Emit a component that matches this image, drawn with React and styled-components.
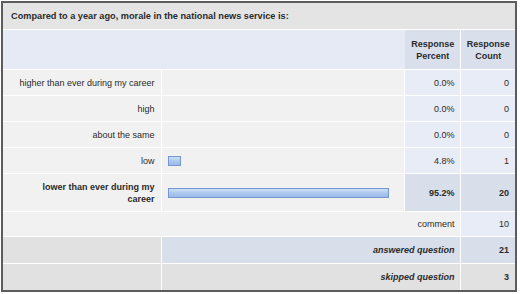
import React from 'react';
import styled, { createGlobalStyle } from 'styled-components';

const GlobalStyle = createGlobalStyle`
  body {
    margin: 0;
    background: #ffffff;
    font-family: "Liberation Sans", Arial, sans-serif;
  }
`;

const Frame = styled.div`
  margin: 1px;
  width: 512px;
  border: 2px solid #5c5c5c;
  background: #ffffff;
`;

const Table = styled.table`
  width: 100%;
  border-collapse: collapse;
  table-layout: fixed;
  font-size: 9px;
  color: #2b2b2b;
`;

const TitleCell = styled.th`
  height: 26px;
  padding: 0 8px;
  background: #e4e4e4;
  border-bottom: 1px solid #ffffff;
  text-align: left;
  font-size: 9.2px;
  font-weight: bold;
`;

const HeadBlank = styled.th`
  height: 37px;
  background: #e5eaf5;
`;

const HeadCell = styled.th`
  padding: 0 5px;
  background: #d9e0eb;
  border-left: ${({ $divided }) => ($divided ? '1px solid #ffffff' : 'none')};
  text-align: center;
  font-weight: bold;
  line-height: 12px;
`;

const Row = styled.tr`
  border-top: 1px solid #ffffff;
`;

const Label = styled.td`
  height: ${({ $tall }) => ($tall ? '37px' : '25px')};
  padding: 0 6px 0 10px;
  background: #f1f1f1;
  border-right: 1px solid #ffffff;
  text-align: right;
  font-weight: ${({ $strong }) => ($strong ? 'bold' : 'normal')};
  line-height: 12px;
`;

const BarCell = styled.td`
  padding: 0 6px;
  background: #f1f1f1;
  border-right: 1px solid #ffffff;
`;

const Bar = styled.div`
  box-sizing: border-box;
  height: 10px;
  border: 1px solid #7596cf;
  background: linear-gradient(to bottom, #cfe0f8 0%, #aac6ef 55%, #9cbbea 100%);
`;

const NumCell = styled.td`
  padding: 0 6px;
  background: ${({ $strong }) => ($strong ? '#d8dfea' : '#e7ecf6')};
  border-right: ${({ $last }) => ($last ? 'none' : '1px solid #ffffff')};
  text-align: right;
  font-weight: ${({ $strong }) => ($strong ? 'bold' : 'normal')};
`;

const SummaryLabel = styled.td`
  height: 24px;
  background: #e1e1e1;
  border-right: 1px solid #ffffff;
`;

const SummaryText = styled.td`
  padding: 0 6px;
  background: ${({ $blue }) => ($blue ? '#d8dfea' : '#e1e1e1')};
  border-right: 1px solid #ffffff;
  text-align: right;
  font-weight: bold;
  font-style: italic;
`;

const SummaryNum = styled.td`
  padding: 0 6px;
  background: ${({ $blue }) => ($blue ? '#d8dfea' : '#e1e1e1')};
  text-align: right;
  font-weight: bold;
`;

const CommentCell = styled.td`
  height: 24px;
  padding: 0 6px;
  background: #f1f1f1;
  border-right: 1px solid #ffffff;
  text-align: right;
`;

const answers = [
  { label: 'higher than ever during my career', percent: 0, count: 0 },
  { label: 'high', percent: 0, count: 0 },
  { label: 'about the same', percent: 0, count: 0 },
  { label: 'low', percent: 4.8, count: 1 },
  { label: 'lower than ever during my career', percent: 95.2, count: 20, top: true },
];

const BAR_TRACK = 230;

const App = () => (
  <>
    <GlobalStyle />
    <Frame>
      <Table>
        <colgroup>
          <col style={{ width: 158 }} />
          <col />
          <col style={{ width: 56 }} />
          <col style={{ width: 54 }} />
        </colgroup>
        <thead>
          <tr>
            <TitleCell colSpan={4}>
              Compared to a year ago, morale in the national news service is:
            </TitleCell>
          </tr>
          <tr>
            <HeadBlank colSpan={2} />
            <HeadCell>Response<br />Percent</HeadCell>
            <HeadCell $divided>Response<br />Count</HeadCell>
          </tr>
        </thead>
        <tbody>
          {answers.map((a) => (
            <Row key={a.label}>
              <Label $strong={a.top} $tall={a.top}>{a.label}</Label>
              <BarCell>
                {a.percent > 0 && (
                  <Bar style={{ width: Math.round((a.percent / 100) * BAR_TRACK) + 2 }} />
                )}
              </BarCell>
              <NumCell $strong={a.top}>{a.percent.toFixed(1)}%</NumCell>
              <NumCell $strong={a.top} $last>{a.count}</NumCell>
            </Row>
          ))}
          <Row>
            <CommentCell colSpan={3}>comment</CommentCell>
            <NumCell $last>10</NumCell>
          </Row>
          <Row>
            <SummaryLabel />
            <SummaryText colSpan={2} $blue>answered question</SummaryText>
            <SummaryNum $blue>21</SummaryNum>
          </Row>
          <Row>
            <SummaryLabel />
            <SummaryText colSpan={2}>skipped question</SummaryText>
            <SummaryNum>3</SummaryNum>
          </Row>
        </tbody>
      </Table>
    </Frame>
  </>
);

export default App;
